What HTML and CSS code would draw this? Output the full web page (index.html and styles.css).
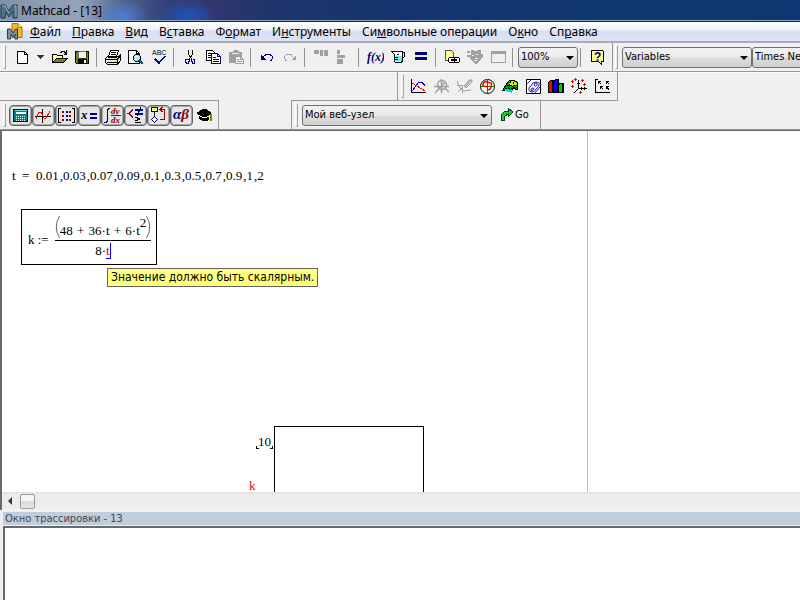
FILE: index.html
```html
<!DOCTYPE html>
<html lang="ru">
<head>
<meta charset="utf-8">
<title>Mathcad - [13]</title>
<link rel="stylesheet" href="styles.css">
</head>
<body>
<header class="titlebar">
  <svg class="logo" viewBox="0 0 18 17" width="18" height="17"><path d="M1 3h4l4 6 4-6h4v13h-4V9l-4 6-3-5-1 6H1z" fill="#4d7386" stroke="#1d3948"/><path d="M2 4h3l4 7M14 4h2v11" fill="none" stroke="#9dbac6"/></svg>
  <h1>Mathcad - [13]</h1>
</header>
<nav class="menubar">
  <svg class="doc" viewBox="0 0 17 17" width="17" height="17"><path d="M5 .500h6l4 4v10H5z" fill="#fbb81c" stroke="#b56c08"/><path d="M11 .500v4h4" fill="#ffe9a0" stroke="#b56c08"/><path d="M.500 6h3l2.500 4 2.500-4h2v10H8v-5l-2 3-2-3-.500 5h-3z" fill="#7b929c" stroke="#24404e"/></svg>
  <a href="#"><u>Ф</u>айл</a><a href="#"><u>П</u>равка</a><a href="#"><u>В</u>ид</a><a href="#">В<u>с</u>тавка</a><a href="#">Ф<u>о</u>рмат</a><a href="#">И<u>н</u>струменты</a><a href="#">Си<u>м</u>вольные операции</a><a href="#">О<u>к</u>но</a><a href="#">Сп<u>р</u>авка</a>
</nav>

<div class="bars">
<div class="bar bar-main">
  <div class="pane">
    <i class="grip"></i>
    <button aria-label="Создать"><svg viewBox="0 0 17 17"><path d="M4.500 2.500h7l3 3v9h-10zM11.500 2.500v3h3" fill="#fff" stroke="#000"/></svg></button>
    <button class="drop" aria-label="Шаблоны"><svg viewBox="0 0 9 5"><path d="M1 0h7L4.500 4z" fill="#333"/></svg></button>
    <button aria-label="Открыть"><svg viewBox="0 0 17 17"><path d="M1.500 13.500v-8h4l1 1h5v3" fill="#ffff8c" stroke="#000"/><path d="M1.500 13.500l4-4h11l-4 4z" fill="#808000" stroke="#000"/><path d="M9 3.500h1v-1h3v1h1v1h1M15.500 1v4h-3" fill="none" stroke="#000"/></svg></button>
    <button aria-label="Сохранить"><svg viewBox="0 0 17 17"><path d="M1.500 2.500h13v12h-12l-1-1z" fill="#808000" stroke="#000"/><path d="M4 2h8v7H4z" fill="#f0f0f0" stroke="#000" stroke-width=".5"/><path d="M4 10h9v5H4z"/><path d="M10 11h2v3h-2z" fill="#fff"/></svg></button>
    <i class="sep"></i>
    <button aria-label="Печать"><svg viewBox="0 0 17 17"><path d="M3.500 7.500l2-6h8l-2 6" fill="#fff" stroke="#000"/><path d="M6 3.500h5M6 5.500h5" stroke="#000"/><path d="M.500 9.500l2-2h11l2-2v6l-3 4h-10l-2-2z" fill="#e8e8e8" stroke="#000"/><path d="M1 10.500h11l3-3M2 13.500h10M12.500 10v5M3 8.500h9" stroke="#000" fill="none"/><path d="M8 11h3v2H8z" fill="#ffff00"/></svg></button>
    <button aria-label="Просмотр"><svg viewBox="0 0 17 17"><path d="M.500 1.500h8l3 3v10H.500zM8.500 1.500v3h3" fill="#fff" stroke="#000"/><circle cx="9" cy="9" r="3.500" fill="#aef0f6" stroke="#000"/><path d="M7 7h2v1H7z" fill="#fff"/><path d="M11 11l4 4" stroke="#00496b" stroke-width="2"/></svg></button>
    <button aria-label="Орфография"><svg viewBox="0 0 17 17"><text x="1" y="6" class="abc">ABC</text><path d="M4 10l4 4 6-7" fill="none" stroke="#000080" stroke-width="1.500"/></svg></button>
    <i class="sep"></i>
    <button aria-label="Вырезать"><svg viewBox="0 0 17 17"><path d="M6.500 1v4l3 5M10.500 1v4l-3 5" fill="none" stroke="#000"/><path d="M7.500 9v2l-1 3h-2l-1-1v-2l1-1h2M9.500 9v2l1 3h2v-4h-2" fill="none" stroke="#000080"/></svg></button>
    <button aria-label="Копировать"><svg viewBox="0 0 17 17"><path d="M1.500 1.500h6l2 2v8h-8z" fill="#fff" stroke="#000"/><path d="M3 4.500h3M3 6.500h4M3 8.500h3" stroke="#000"/><path d="M6.500 4.500h6l3 3v7h-9zM12.500 4.500v3h3" fill="#fff" stroke="#000080"/><path d="M8 8.500h3M8 10.500h6M8 12.500h6" stroke="#000080"/></svg></button>
    <button class="off" aria-label="Вставить" disabled><svg viewBox="0 0 17 17"><path d="M1 3h3l2-2h3l2 2h3v5H7v6H1z" fill="#a0a0a0"/><path d="M4 4h7" stroke="#f0f0f0"/><path d="M7.500 7.500h5l3 3v4h-8zM12.500 7.500v3h3M9 10.500h2M9 12.500h5" fill="#f0f0f0" stroke="#a0a0a0"/></svg></button>
    <i class="sep"></i>
    <button aria-label="Отменить"><svg viewBox="0 0 17 17"><path d="M4 8l3-2.500h4l2 1.500.500 2-1 2-1.500 1" fill="none" stroke="#000080"/><path d="M2 6v5h5z" fill="#000080"/></svg></button>
    <button class="off" aria-label="Вернуть" disabled><svg viewBox="0 0 17 17"><path d="M11 8L9 5.500H5L3 7l-.500 2 1 2 1.500 1" fill="none" stroke="#a0a0a0"/><path d="M14 6v5H9z" fill="#a0a0a0"/></svg></button>
    <i class="sep"></i>
    <button class="off" aria-label="По горизонтали" disabled><svg viewBox="0 0 17 17"><path d="M1 1h5v4H1zM7 1h3v6H7zM11 1h4v6h-4z" fill="#a0a0a0"/></svg></button>
    <button class="off" aria-label="По вертикали" disabled><svg viewBox="0 0 17 17"><path d="M1 1h3v4H1zM1 6h8v3H1zM1 10h6v5H1z" fill="#a0a0a0"/></svg></button>
    <i class="sep"></i>
    <button aria-label="Функция"><svg viewBox="0 0 17 17"><text x="0" y="12" class="fx">f(x)</text></svg></button>
    <button aria-label="Единицы"><svg viewBox="0 0 17 17"><path d="M1.500 2.500h11v9l-1 2h-6l-1-1v-7l-3-3z" fill="#fff" stroke="#000"/><path d="M6 7h6v5H6z" fill="#6ee6ea"/><path d="M7 5.500h2M5 8.500h3M5 10.500h3" stroke="#000"/><path d="M13 3.500h1.500v4l-2 2" fill="none" stroke="#000"/></svg></button>
    <button aria-label="Вычислить"><svg viewBox="0 0 17 17"><path d="M2 3h12v3H2zM2 8h12v3H2z" fill="#000080"/></svg></button>
    <i class="sep"></i>
    <button aria-label="Гиперссылка"><svg viewBox="0 0 17 17"><path d="M1.500 1.500h6l2 2v8h-8z" fill="#ffff8c" stroke="#555"/><path d="M5.500 8.500h5v5h-5l-1-1v-3zM10.500 8.500h4l1 1v3l-1 1h-4" fill="#fff" stroke="#000"/><path d="M7 11h6" stroke="#000" stroke-width="2"/></svg></button>
    <button class="off" aria-label="Компонент" disabled><svg viewBox="0 0 17 17"><path d="M0 2h3v2H0zM4 1h3v1h3V1h4v4h2v4h-2v2h-1l-4 4H8L3 10V8H0V6h4z" fill="#a0a0a0"/><path d="M5 6h2M9 5h2M8 9h3M7 11h3" stroke="#f0f0f0"/></svg></button>
    <button class="off" aria-label="Ресурсы" disabled><svg viewBox="0 0 17 17"><path d="M1.500 2.500h14v11h-14z" fill="#f0f0f0" stroke="#a0a0a0"/><path d="M1 2h15v3H1z" fill="#a0a0a0"/></svg></button>
    <i class="sep"></i>
    <label class="combo zoom"><select aria-label="Масштаб"><option>100%</option></select></label>
    <i class="sep"></i>
    <button aria-label="Справка"><svg viewBox="0 0 17 17"><path d="M2.500 1.500h11l1 1v10h-2v3l-3-3h-7z" fill="#ffff8c" stroke="#000"/><text x="5" y="12" class="help">?</text></svg></button>
  </div>
  <div class="pane pane-format">
    <i class="grip"></i>
    <label class="combo style"><select aria-label="Стиль"><option>Variables</option></select></label>
    <label class="combo font"><select aria-label="Шрифт"><option>Times New Roman</option></select></label>
  </div>
</div>

<div class="bar bar-graph">
  <div class="pane boxed">
    <i class="grip"></i>
    <button aria-label="График"><svg viewBox="0 0 17 17"><path d="M1.500 1v14M1 14.500h15" stroke="#000"/><path d="M2 13l4-5 3-4h3l3 4" fill="none" stroke="#0000c8"/><path d="M2 5l5 3 8 5" fill="none" stroke="#f00"/></svg></button>
    <button class="off" aria-label="Увеличить" disabled><svg viewBox="0 0 17 17" class="soft"><circle cx="9" cy="7" r="4.500" fill="none" stroke="#a0a0a0" stroke-width="1.500"/><path d="M1 8.500h15M8.500 1v14M2 15L12 4M12 10l4 4" fill="none" stroke="#a0a0a0" stroke-width="1.500"/></svg></button>
    <button class="off" aria-label="Трассировка" disabled><svg viewBox="0 0 17 17" class="soft"><path d="M8 8l5-6h3v2l-6 6zM1 7.500h5M6.500 7v8M1 3l3 7 4 3 7-1M2 14l5-5" fill="none" stroke="#a0a0a0"/><path d="M9 8l5-6h2l-6 7z" fill="#a0a0a0"/></svg></button>
    <button aria-label="Полярный"><svg viewBox="0 0 17 17" class="soft"><circle cx="8.500" cy="8.500" r="7" fill="#fff" stroke="#000"/><path d="M1 8.500h15M8.500 1v15" stroke="#008000"/><path d="M8.500 8.500Q3 9 4 6t4-2 4 1 0 4-4 2" fill="none" stroke="#f00" stroke-width="1.500"/></svg></button>
    <button aria-label="Поверхность"><svg viewBox="0 0 17 17"><path d="M1 12l3-5 3-4 4-1 4 2 1 4-1 4-3-2-3 3-3-1z" fill="#00a000" stroke="#000"/><path d="M8 3h3l4 2v3l-2-1-3 1-3-1z" fill="#e8e800"/><path d="M3 11h3l2 1h3l-1 3-3-1-4-1z" fill="#00d8e8"/><path d="M5 7l3 1 3-1 4 1M3 10l4 0 3 1 3-2M9 3L6 12M12 4l-2 9" fill="none" stroke="#000" stroke-dasharray="2 1"/></svg></button>
    <button aria-label="Контурный"><svg viewBox="0 0 17 17" class="soft"><path d="M1.500 1.500h14v14h-14z" fill="#fff" stroke="#000"/><path d="M2 6l4-4M15 9l-5 6M4 12q-1-3 2-4 1-4 5-4t3 3-3 4q-1 3-4 3t-3-2M6 12q0-2 2-2t0 2-2 0M9 7q0-2 2-2t1 2-3 0" fill="none" stroke="#0000b0" stroke-width=".9"/></svg></button>
    <button aria-label="Гистограмма"><svg viewBox="0 0 17 17"><path d="M.500 4.500l2-2h3v12h-5z" fill="#f00" stroke="#000"/><path d="M5.500 3.500l2-2h3v13h-5z" fill="#0000f0" stroke="#000"/><path d="M10.500 6.500l2-1h3v9h-5z" fill="#00d000" stroke="#000"/><path d="M5 3v12M10 2v13M15 6v9" stroke="#000" stroke-width="2"/></svg></button>
    <button aria-label="Точечный"><svg viewBox="0 0 17 17"><path d="M7.500 2v9M7 10.500h9M7 11l-4 4M10.500 9v3M13.500 9v3M6 5h3" fill="none" stroke="#000"/><path d="M0 3.500h3M1.500 2v3M3 1.500h3M4.500 0v3M10 2.500h3M11.500 1v3M12 6.500h3M13.500 5v3M0 8.500h3M1.500 7v3M8 14.500h3M9.500 13v3" stroke="#f00"/></svg></button>
    <button aria-label="Векторный"><svg viewBox="0 0 17 17"><path d="M1.500 1v14M1 14.500h15M1 1.500h3" stroke="#000"/><path d="M4 3h3v1H5v2H4zM12 3h3v1h-2v2h-1zM6 8h3v1H7v2H6zM12 8h3v1h-2v2h-1z"/><path d="M5 4l2 2M13 4l2 2M7 9l2 2M13 9l2 3" stroke="#000"/></svg></button>
  </div>
</div>

<div class="bar bar-math">
  <div class="pane boxed">
    <i class="grip"></i>
    <button class="on" aria-label="Калькулятор"><svg viewBox="0 0 17 17"><path d="M1.500 2.500h14v12h-14z" fill="#007f90" stroke="#000060"/><path d="M2.500 3.500h12" stroke="#70d8e0"/><path d="M4 5h10v2H4z" fill="#fff"/><path d="M4 9.500h10M4 11.500h10M4 13.500h10" stroke="#e0ffff" stroke-dasharray="1 1"/></svg></button>
    <button class="on" aria-label="График"><svg viewBox="0 0 17 17"><path d="M0 9.500h16M7.500 2v14" stroke="#000"/><path d="M1 12l3-7h2l3 6h2l4-7" fill="none" stroke="#f00"/></svg></button>
    <button class="on" aria-label="Матрица"><svg viewBox="0 0 17 17"><path d="M3 1.500H.500v14H3M14 1.500h2.500v14H14" fill="none" stroke="#000"/><path d="M4 4h2v2H4zM11 4h2v2h-2zM4 12h2v2H4zM11 12h2v2h-2zM4 8h2v2H4zM11 8h2v2h-2z" fill="#900000"/><path d="M8 4h2v2H8zM8 8h2v2H8zM8 12h2v2H8z" fill="#000080"/></svg></button>
    <button class="on" aria-label="Вычисление"><svg viewBox="0 0 17 17"><text x="0" y="12" class="xi">x</text><path d="M9 6h7v2H9zM9 10h7v2H9z" fill="#000080"/></svg></button>
    <button class="on" aria-label="Анализ"><svg viewBox="0 0 17 17"><path d="M6 1.500H4.500L3.500 3v11l-1 1.500H0" fill="none" stroke="#000080" stroke-width="1.500"/><path d="M7 8.500h10" stroke="#900000"/><text x="7" y="7" class="dy">dy</text><text x="7" y="16" class="dy">dx</text></svg></button>
    <button class="on" aria-label="Сравнение"><svg viewBox="0 0 17 17"><path d="M6 3L1.500 6.500 6 10" fill="none" stroke="#900000" stroke-width="1.500"/><path d="M8 2h8v2H8zM8 6h8v2H8z" fill="#000080"/><path d="M14 0l-4 9" stroke="#000080"/><path d="M8 10l5 2-5 2M8 15.500h6" fill="none" stroke="#000"/></svg></button>
    <button class="on" aria-label="Программирование"><svg viewBox="0 0 17 17"><path d="M1.500 .500h6v4h-6zM4.500 9.500l3 3-3 3-3-3z" fill="#ffff8c" stroke="#000080"/><path d="M4.500 5v4" stroke="#000"/><path d="M10 12.500h4.500v-10H10M12.500 0L10 2.500 12.500 5" fill="none" stroke="#900000"/></svg></button>
    <button class="on" aria-label="Греческий"><svg viewBox="0 0 17 17"><text x="0" y="12" class="ab">α<tspan fill="#900000">β</tspan></text></svg></button>
    <button aria-label="Символьная"><svg viewBox="0 0 17 17"><path d="M0 6l7-4h3l6 4-5 4H6z"/><path d="M3 9h10v4l-3 1H7l-4-2z"/><path d="M3 8.500l4 2h3l4-2" stroke="#fff" fill="none"/><path d="M14.500 7v7" stroke="#808000" stroke-width="2"/></svg></button>
  </div>
  <div class="pane boxed">
    <i class="grip"></i>
    <label class="combo site"><select aria-label="Адрес"><option>Мой веб-узел</option></select></label>
    <button class="go"><svg viewBox="0 0 14 16"><path d="M1 13V8l4-4h3V1l5 4-5 5V7L5 9l-1 5z" fill="#20d020" stroke="#042"/></svg>Go</button>
  </div>
</div>
</div>

<main class="sheet">
  <div class="page"></div>
  <div class="region range">t&nbsp; =&nbsp; 0.01<b>,</b>0.03<b>,</b>0.07<b>,</b>0.09<b>,</b>0.1<b>,</b>0.3<b>,</b>0.5<b>,</b>0.7<b>,</b>0.9<b>,</b>1<b>,</b>2</div>
  <div class="region formula">
    <span>k&nbsp;:=</span>
    <span class="frac">
      <span class="num"><svg class="paren" viewBox="0 0 5 24"><path d="M4.500 1Q-2 12 4.500 23" /></svg><span>48 <b>+</b> 36·t <b>+</b> 6·t<sup>2</sup></span><svg class="paren" viewBox="0 0 5 24"><path d="M.500 1Q7 12 .500 23" /></svg></span>
      <span class="den">8·<em>t</em></span>
    </span>
  </div>
  <div class="tip" role="tooltip">Значение должно быть скалярным.</div>
  <div class="region limit">10</div>
  <div class="region axis">k</div>
  <div class="plot"></div>
</main>
<div class="scroll"><button class="left" aria-label="Влево"></button><button class="thumb" aria-label="Прокрутка"></button></div>
<section class="trace">
  <h2>Окно трассировки - 13</h2>
  <div class="log"></div>
</section>
</body>
</html>
```
FILE: styles.css
```css
* { box-sizing: border-box; }
body {
  margin: 0;
  height: 100vh;
  display: flex;
  flex-direction: column;
  overflow: hidden;
  background: #f0f0f0;
  color: #000;
  font: 11px/14px "DejaVu Sans Condensed", "DejaVu Sans", sans-serif;
}
button { padding: 0; border: 0; background: none; font: inherit; color: inherit; }
.titlebar {
  flex: none;
  height: 22px;
  display: flex;
  align-items: center;
  gap: 3px;
  border-bottom: 1px solid #16233f;
  box-shadow: inset 0 -1px #8fa6cb;
  background:
    radial-gradient(ellipse 26px 16px at 122px 16px, #4a7fd0, transparent),
    radial-gradient(ellipse 30px 16px at 188px 16px, #1d55bd, transparent),
    linear-gradient(90deg, #8292a8 0, #94a3bb 80px, #51618c 125px, #31427a 165px, #34366c 210px, #1e356c 270px, #15346e 400px, #10376f 600px, #0e3672 100%);
}
.titlebar h1 { margin: 0; font: 12px/20px "Noto Sans", sans-serif; }
.menubar {
  flex: none;
  height: 21px;
  display: flex;
  align-items: center;
  padding-left: 7px;
  gap: 11px;
  border-bottom: 2px solid #a9acb5;
  background: linear-gradient(#fff 0, #eef2f9 40%, #d8dff0 50%, #dde3f4 100%);
  font: 12px/16px "Noto Sans", "Open Sans", sans-serif;
}
.menubar a { color: #000; text-decoration: none; }
.doc { margin-right: -5px; }
.bars { flex: none; }
.bar { display: flex; height: 29px; }
.pane { display: flex; align-items: center; }
.bar-main { border-bottom: 1px solid #989898; box-shadow: 0 1px #fff; }
.bar-main .pane { border-right: 1px solid #989898; padding-right: 3px; }
.bar-main .pane-format { flex: 1; border-right: 0; padding: 0; overflow: hidden; }
.pane-format .grip { margin: 0 4px 0 2px; }
.bar-graph .boxed { margin-left: 397px; border-bottom: 1px solid #989898; padding-right: 3px; }
.bar-graph .grip { margin-right: 3px; }
.bar-math { gap: 72px; border-bottom: 1px solid #989898; height: 30px; margin-top: -1px; }
.boxed { border: solid #989898; border-width: 0 1px; }
.bar-math .boxed { border-top: 1px solid #989898; }
.bar-math .boxed:first-child { border-left: 0; padding-right: 2px; }
.grip { flex: none; width: 3px; height: 24px; margin: 0 4px 0 3px; border: 1px solid #a0a0a0; border-left-color: #fff; border-top-color: #fff; }
.bar-math .boxed:first-child .grip { margin-right: 3px; }
.sep { flex: none; width: 1px; height: 19px; margin: 0 5px 0 2px; background: #909090; }
.pane button { flex: none; width: 23px; height: 23px; display: flex; align-items: center; justify-content: center; }
.pane button svg { flex: none; width: 17px; height: 17px; shape-rendering: crispEdges; }
.pane button .soft { shape-rendering: auto; }
.pane .drop { width: 15px; }
.pane .drop svg { width: 9px; height: 5px; }
.pane .on { height: 21px; border: 1px solid #626262; border-radius: 4px; background: #e6e6e6; box-shadow: inset 0 0 0 1px #a8a8a8; }
.abc { font: 7px "Liberation Sans", sans-serif; }
.fx { font: italic bold 12px "Liberation Serif", serif; fill: #000080; }
.help { font: bold 12px "Liberation Sans", sans-serif; fill: #000080; }
.xi { font: italic bold 13px "Liberation Serif", serif; }
.dy { font: italic bold 9px "Liberation Serif", serif; fill: #900000; }
.ab { font: italic bold 15px "Liberation Serif", serif; fill: #000080; }
.combo { flex: none; position: relative; display: block; }
.combo select {
  appearance: none;
  display: block;
  width: 100%;
  height: 21px;
  padding: 0 16px 0 2px;
  border: 1px solid #707070;
  border-radius: 3px;
  background: linear-gradient(#f2f2f2, #ebebeb 48%, #dddddd 52%, #cfcfcf);
  font: inherit;
  color: #000;
}
.combo::after { content: ""; position: absolute; right: 4px; top: 9px; border: 4px solid transparent; border-top-color: #000; border-bottom: 0; }
.zoom { width: 60px; }
.style { width: 130px; }
.font { width: 180px; }
.site { width: 190px; }
.pane .go { width: auto; margin: 0 11px 0 8px; gap: 1px; }
.pane .go svg { width: 14px; height: 16px; }
.sheet {
  flex: 1;
  position: relative;
  overflow: hidden;
  background: #fff;
  border-top: 1px solid #696969;
  border-left: 2px solid #696969;
  font: 13px/16px "Liberation Serif", serif;
}
.page { position: absolute; left: 0; top: 0; bottom: 0; width: 586px; border-right: 1px solid #c0c0c0; }
.region { position: absolute; white-space: nowrap; }
.region b { font-weight: 400; }
.range { left: 10px; top: 37px; }
.range b { padding-left: 1px; }
.formula { left: 19px; top: 78px; height: 56px; display: flex; align-items: center; gap: 6px; padding: 6px 5px 0 6px; border: 1px solid #000; }
.frac { display: flex; flex-direction: column; align-items: center; margin-top: -6px; }
.num { display: flex; align-items: flex-end; border-bottom: 1px solid #000; padding-bottom: 1px; }
.num b { padding: 0 1px; }
.num sup { font-size: 13px; line-height: 0; vertical-align: 8px; }
.paren { width: 5px; height: 24px; fill: none; stroke: #666; }
.den { padding-top: 2px; }
.den em { font-style: normal; color: #d00020; border-right: 1px solid #00f; border-bottom: 1px solid #00f; }
.tip { position: absolute; left: 105px; top: 137px; height: 19px; padding: 0 3px; border: 1px solid #646464; background: #ffff80; font: 12px/17px "DejaVu Sans Condensed", sans-serif; white-space: nowrap; }
.limit { left: 256px; top: 303px; }
.limit::before, .limit::after { content: ""; position: absolute; bottom: 1px; width: 2px; height: 2px; border: solid #000; border-width: 0 0 1px 1px; left: -2px; }
.limit::after { left: auto; right: -2px; border-width: 0 1px 1px 0; }
.axis { left: 247px; top: 349px; line-height: 12px; color: #f00000; }
.plot { position: absolute; left: 272px; top: 295px; width: 150px; height: 150px; border: 1px solid #000; }
.scroll { flex: none; height: 18px; display: flex; align-items: center; border-left: 2px solid #696969; background: linear-gradient(#e2e2e2, #ececec 3px, #ececec 15px, #f4f4f4); }
.left { width: 16px; height: 16px; display: flex; align-items: center; justify-content: center; }
.left::before { content: ""; border: 4px solid transparent; border-right-color: #333; border-left: 0; }
.scroll .thumb { width: 15px; height: 15px; margin-left: 2px; border: 1px solid #989898; border-radius: 2px; background: linear-gradient(#f6f6f6 50%, #dadada 50%, #e8e8e8); }
.trace { flex: none; height: 90px; display: flex; flex-direction: column; padding: 2px 0 0 3px; }
.trace h2 { margin: 0; padding-left: 2px; font: 11px/13px "DejaVu Sans Condensed", sans-serif; color: #404850; background: #c0cddb; }
.log { flex: 1; margin-top: 1px; border: solid #696969; border-width: 2px 0 0 2px; background: #fff; }
```
